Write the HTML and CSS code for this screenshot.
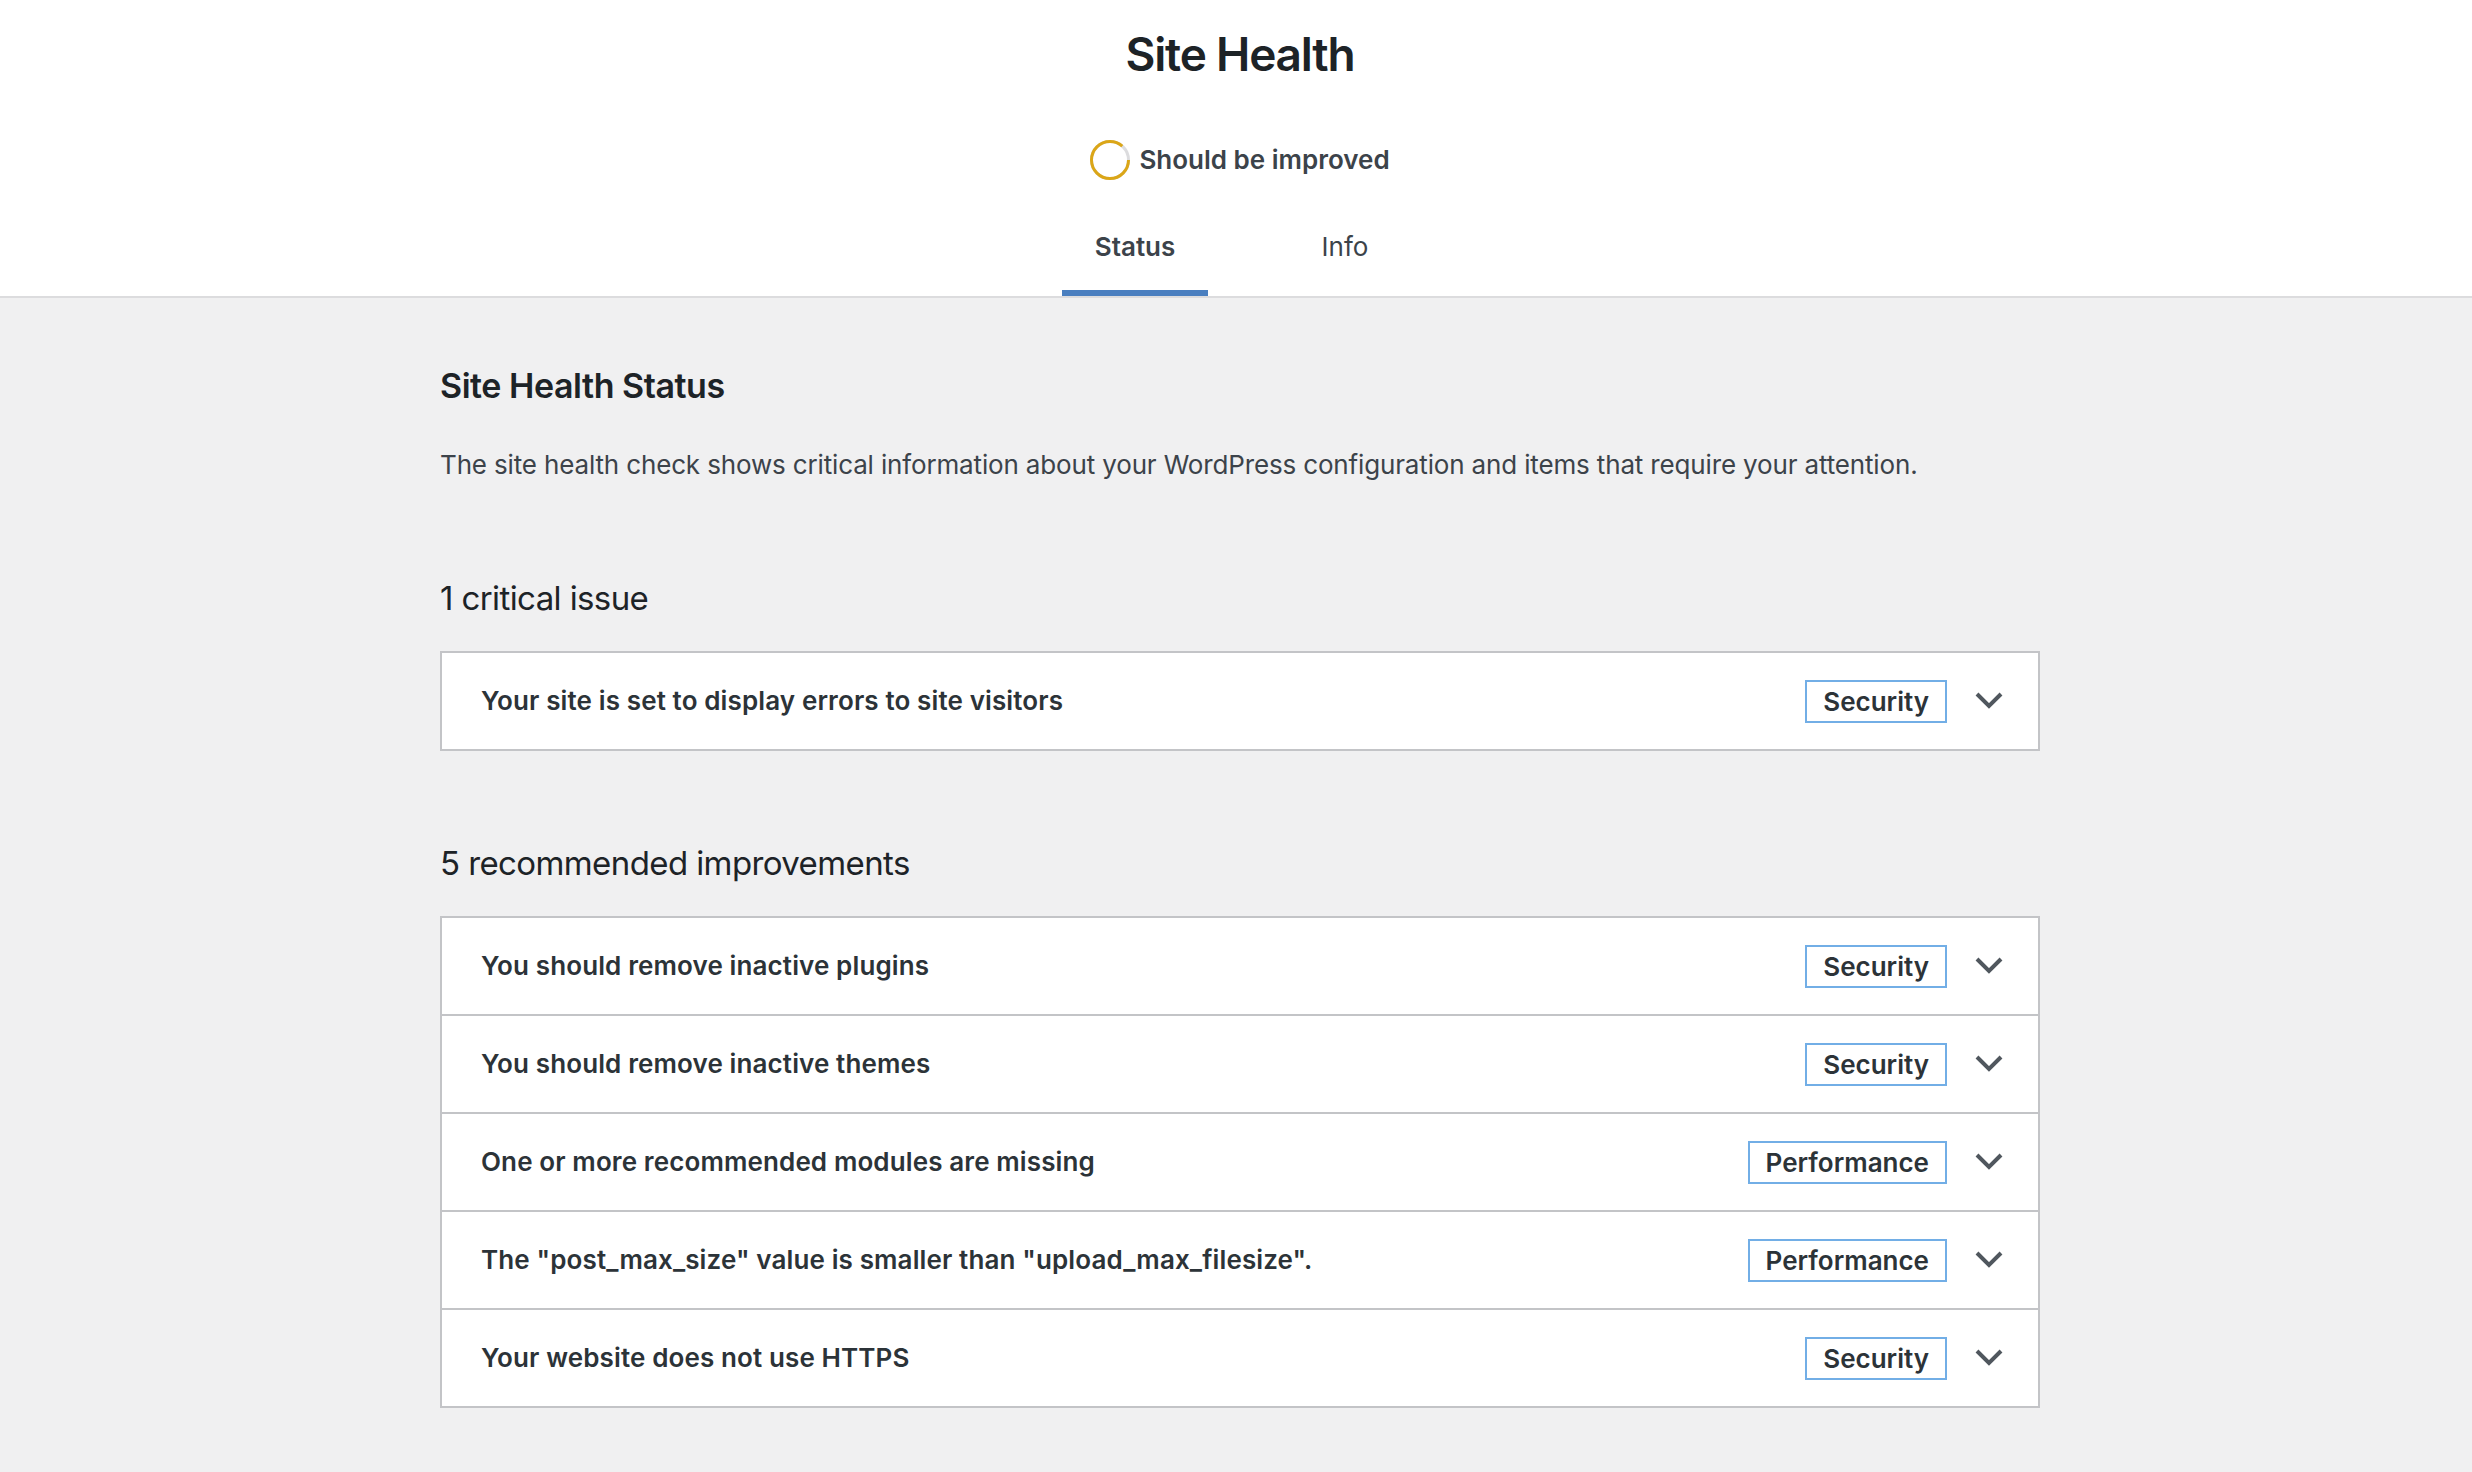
FILE: index.html
```html
<!DOCTYPE html>
<html lang="en">
<head>
<meta charset="utf-8">
<title>Site Health</title>
<link rel="stylesheet" href="styles.css">
</head>
<body>
<header class="sh-header">
  <h1 class="sh-title">Site Health</h1>
  <div class="sh-progress">
    <svg class="sh-ring" width="40" height="40" viewBox="0 0 40 40" aria-hidden="true">
      <circle cx="20" cy="20" r="18.5" fill="none" stroke="#dcdcde" stroke-width="3"/>
      <circle cx="20" cy="20" r="18.5" fill="none" stroke="#dba617" stroke-width="3" stroke-dasharray="100 116.24"/>
    </svg>
    <span class="sh-progress-label">Should be improved</span>
  </div>
  <nav class="sh-tabs">
    <a class="sh-tab is-active">Status</a>
    <a class="sh-tab">Info</a>
  </nav>
</header>
<main class="sh-body">
  <h2 class="sh-heading">Site Health Status</h2>
  <p class="sh-desc">The site health check shows critical information about your WordPress configuration and items that require your attention.</p>

  <section class="sh-issues sh-issues-critical">
    <h3 class="sh-count">1 critical issue</h3>
    <div class="sh-accordion">
      <div class="sh-row">
        <span class="sh-row-title">Your site is set to display errors to site visitors</span>
        <span class="sh-badge">Security</span>
        <svg class="sh-chevron" width="28" height="18" viewBox="0 0 28 18" aria-hidden="true"><polyline points="2,2 14,14 26,2"/></svg>
      </div>
    </div>
  </section>

  <section class="sh-issues">
    <h3 class="sh-count">5 recommended improvements</h3>
    <div class="sh-accordion">
      <div class="sh-row">
        <span class="sh-row-title">You should remove inactive plugins</span>
        <span class="sh-badge">Security</span>
        <svg class="sh-chevron" width="28" height="18" viewBox="0 0 28 18" aria-hidden="true"><polyline points="2,2 14,14 26,2"/></svg>
      </div>
      <div class="sh-row">
        <span class="sh-row-title">You should remove inactive themes</span>
        <span class="sh-badge">Security</span>
        <svg class="sh-chevron" width="28" height="18" viewBox="0 0 28 18" aria-hidden="true"><polyline points="2,2 14,14 26,2"/></svg>
      </div>
      <div class="sh-row">
        <span class="sh-row-title">One or more recommended modules are missing</span>
        <span class="sh-badge">Performance</span>
        <svg class="sh-chevron" width="28" height="18" viewBox="0 0 28 18" aria-hidden="true"><polyline points="2,2 14,14 26,2"/></svg>
      </div>
      <div class="sh-row">
        <span class="sh-row-title">The "post_max_size" value is smaller than "upload_max_filesize".</span>
        <span class="sh-badge">Performance</span>
        <svg class="sh-chevron" width="28" height="18" viewBox="0 0 28 18" aria-hidden="true"><polyline points="2,2 14,14 26,2"/></svg>
      </div>
      <div class="sh-row">
        <span class="sh-row-title">Your website does not use HTTPS</span>
        <span class="sh-badge">Security</span>
        <svg class="sh-chevron" width="28" height="18" viewBox="0 0 28 18" aria-hidden="true"><polyline points="2,2 14,14 26,2"/></svg>
      </div>
    </div>
  </section>
</main>
</body>
</html>
```

FILE: styles.css
```css
* { box-sizing: border-box; }

body {
  margin: 0;
  background: #f0f0f1;
  font-family: Inter, "Noto Sans", sans-serif;
  color: #3c434a;
}

.sh-header {
  background: #fff;
  border-bottom: 2px solid #dcdcde;
  padding: 24px 0 0 8px;
  display: flex;
  flex-direction: column;
  align-items: center;
}

.sh-title {
  margin: 0 0 56px;
  font-size: 46px;
  line-height: 60px;
  font-weight: 600;
  letter-spacing: -1.2px;
  color: #1d2327;
}

.sh-progress {
  display: flex;
  align-items: center;
  gap: 9px;
  height: 40px;
  margin-bottom: 32px;
}

.sh-ring { display: block; flex: none; }

.sh-progress-label {
  font-size: 26px;
  font-weight: 600;
  line-height: 40px;
  color: #3c434a;
}

.sh-tabs {
  display: grid;
  grid-template-columns: 210px 210px;
}

.sh-tab {
  display: block;
  margin: 0 32px;
  padding: 17px 0 31px;
  text-align: center;
  font-size: 26px;
  line-height: 36px;
  color: #3c434a;
}

.sh-tab.is-active {
  font-weight: 600;
  box-shadow: inset 0 -6px #4a7fc0;
}

.sh-body {
  width: 1600px;
  margin-left: calc(50% - 796px);
  padding: 66px 0 60px;
}

.sh-heading {
  margin: 0 0 39px;
  font-size: 34px;
  line-height: 44px;
  font-weight: 600;
  letter-spacing: -0.45px;
  color: #1d2327;
}

.sh-desc {
  margin: 0 0 93px;
  font-size: 26px;
  line-height: 36px;
  letter-spacing: -0.15px;
  color: #3c434a;
}

.sh-count {
  margin: 0 0 31px;
  font-size: 33px;
  line-height: 44px;
  font-weight: 400;
  letter-spacing: -0.6px;
  color: #1d2327;
}

.sh-issues-critical { margin-bottom: 90px; }

.sh-accordion {
  background: #fff;
  border: 2px solid #c3c4c7;
}

.sh-row {
  box-sizing: content-box;
  display: flex;
  align-items: center;
  height: 96px;
  padding: 0 35px 0 39px;
}

.sh-row + .sh-row { border-top: 2px solid #c3c4c7; }

.sh-row-title {
  flex: 1;
  font-size: 26px;
  line-height: 36px;
  font-weight: 600;
  letter-spacing: 0.12px;
  color: #2c3338;
}

.sh-badge {
  flex: none;
  border: 2px solid #72aee6;
  padding: 0 16px;
  font-size: 26px;
  line-height: 39px;
  font-weight: 600;
  color: #2c3338;
}

.sh-chevron {
  display: block;
  flex: none;
  margin-left: 28px;
  fill: none;
  stroke: #50575e;
  stroke-width: 4;
}
```
